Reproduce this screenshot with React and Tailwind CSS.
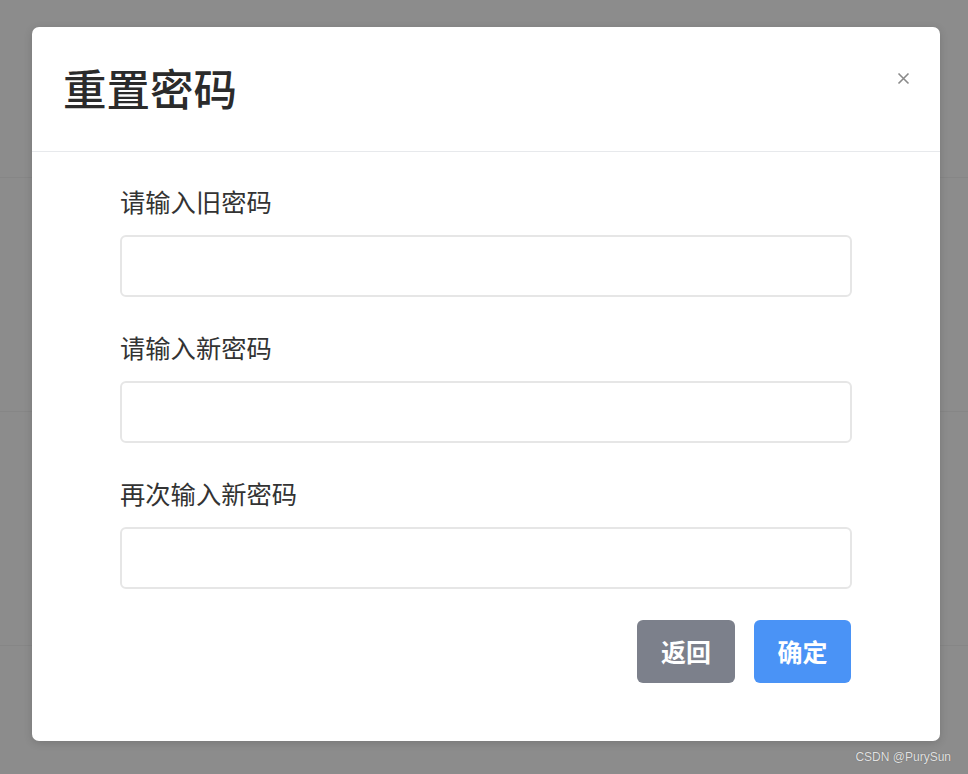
import React, { useState } from 'react';

const FONT = { fontFamily: '"Noto Sans CJK SC", "Noto Sans", "Liberation Sans", sans-serif' };

const fields = [
  { id: 'oldPwd', label: '请输入旧密码' },
  { id: 'newPwd', label: '请输入新密码' },
  { id: 'confirmPwd', label: '再次输入新密码' },
];

const ResetPasswordModal = () => {
  const [values, setValues] = useState({ oldPwd: '', newPwd: '', confirmPwd: '' });

  return (
    <div className="absolute left-[32px] top-[27px] w-[908px] h-[714px] bg-white rounded-[7px] shadow-[0_2px_8px_rgba(0,0,0,0.15)] flex flex-col">
      {/* header */}
      <div className="h-[125px] flex items-center justify-between pl-[31px] pr-[29px] border-b border-[#e7e9ec]">
        <h2 className="text-[43.5px] font-medium text-[#2b2b2b] leading-none pb-[2px]">重置密码</h2>
        <button className="self-start mt-[43px] w-[16px] h-[16px] flex items-center justify-center text-[#8a8a8a]">
          <svg width="13" height="13" viewBox="0 0 13 13" fill="none" stroke="currentColor" strokeWidth="1.6">
            <path d="M1.5 1.5l10 10M11.5 1.5l-10 10" />
          </svg>
        </button>
      </div>

      {/* form */}
      <div className="px-[88px] pt-[32px]">
        {fields.map((f, i) => (
          <div key={f.id} className={i > 0 ? 'mt-[33px]' : ''}>
            <label htmlFor={f.id} className="block text-[25.3px] leading-[34px] text-[#333333] mb-[17px]">
              {f.label}
            </label>
            <input
              id={f.id}
              type="password"
              value={values[f.id]}
              onChange={(e) => setValues({ ...values, [f.id]: e.target.value })}
              className="block w-full h-[62px] rounded-[6px] border-2 border-[#e6e6e6] px-4 text-[22px] outline-none"
            />
          </div>
        ))}

        <div className="flex justify-end gap-[19px] mt-[31px] pr-px">
          <button className="w-[98px] h-[63px] rounded-[6px] bg-[#7c808b] text-white text-[25px] font-bold">返回</button>
          <button className="w-[97px] h-[63px] rounded-[6px] bg-[#4a93f6] text-white text-[25px] font-bold">确定</button>
        </div>
      </div>
    </div>
  );
};

const App = () => {
  return (
    <div className="relative w-[968px] h-[774px] overflow-hidden bg-[#8c8c8c]" style={FONT}>
      {/* dimmed page rows behind the dialog */}
      <div className="flex flex-col">
        <div className="h-[178px] border-b border-[#868686]" />
        <div className="h-[234px] border-b border-[#868686]" />
        <div className="h-[234px] border-b border-[#868686]" />
      </div>

      <ResetPasswordModal />

      <div
        className="absolute right-[17px] bottom-[11px] text-[12px] leading-none text-[#e2e2e2]"
        style={{ fontFamily: '"Liberation Sans", Arial, sans-serif', textShadow: '0 0 1px rgba(0,0,0,0.4)' }}
      >
        CSDN @PurySun
      </div>
    </div>
  );
};

export default App;
